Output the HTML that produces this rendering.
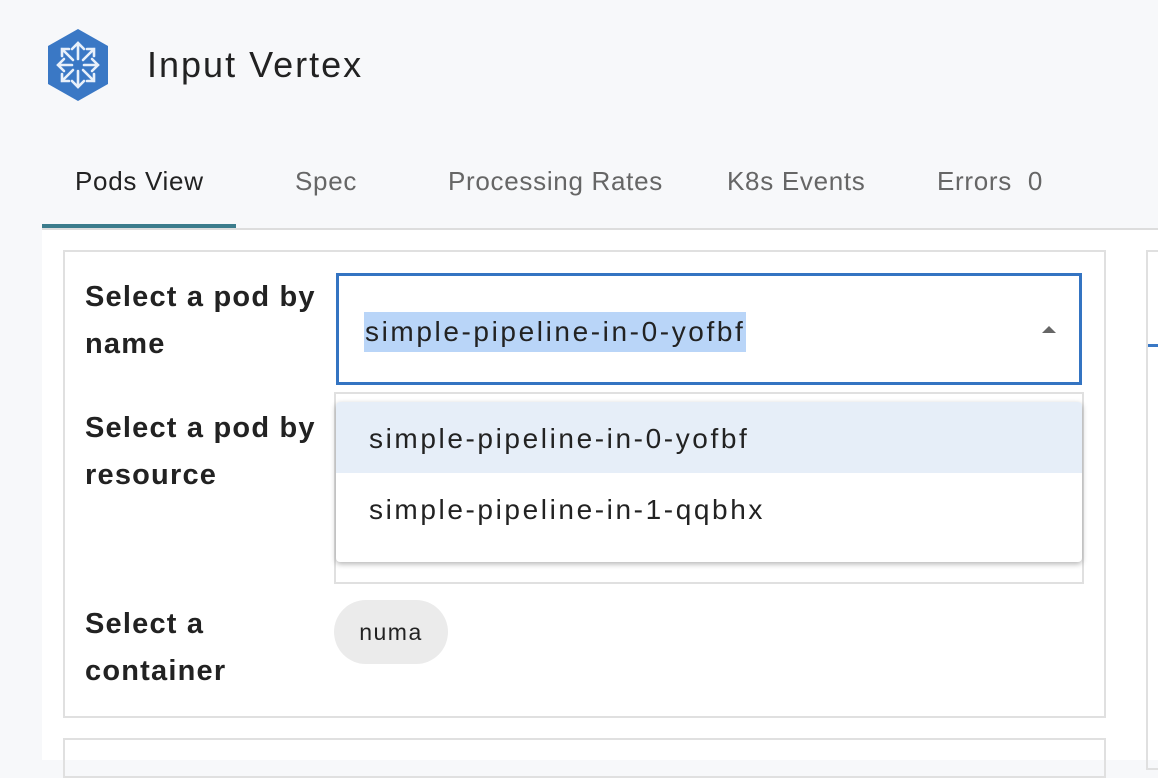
<!DOCTYPE html>
<html><head><meta charset="utf-8"><style>
*{margin:0;padding:0;box-sizing:border-box}
body{width:1158px;height:760px;overflow:hidden;background:#f7f8fa;font-family:"Liberation Sans",sans-serif;color:#222;position:relative}
.abs{position:absolute}
.tab{position:absolute;top:166px;font-size:26px;color:#666;white-space:nowrap;letter-spacing:0.7px}
.lbl{position:absolute;left:85px;font-size:29px;font-weight:bold;color:#222;line-height:47px;letter-spacing:1.2px}
.opt{font-size:28px;letter-spacing:2.6px}
</style></head><body>
<svg class="abs" style="left:44px;top:27px" width="68" height="76" viewBox="0 0 68 76">
<polygon points="34,2 64,19 64,57 34,74 4,57 4,19" fill="#3a78c5"/>
<g stroke="#e8f0fa" stroke-width="2.6" fill="none" stroke-linecap="round">
<path d="M34 32V16M28 22l6-6 6 6"/><path d="M34 44V60M28 54l6 6 6-6"/>
<path d="M28 38H14M20 32l-6 6 6 6"/><path d="M40 38H54M48 32l6 6-6 6"/>
<path d="M29 33L18 22M18 29v-7h7"/><path d="M39 33L50 22M43 22h7v7"/>
<path d="M29 43L18 54M18 47v7h7"/><path d="M39 43L50 54M50 47v7h-7"/>
</g></svg>
<div class="abs" style="left:147px;top:44px;font-size:36px;color:#222;letter-spacing:2px">Input Vertex</div>
<div class="tab" style="left:75px;color:#222">Pods View</div>
<div class="tab" style="left:295px">Spec</div>
<div class="tab" style="left:448px">Processing Rates</div>
<div class="tab" style="left:727px">K8s Events</div>
<div class="tab" style="left:937px">Errors&nbsp; 0</div>
<div class="abs" style="left:42px;top:228px;width:1116px;height:2px;background:#ddd"></div>
<div class="abs" style="left:42px;top:224px;width:194px;height:4px;background:#3b7c8c"></div>
<div class="abs" style="left:42px;top:230px;width:1116px;height:530px;background:#fff"></div>
<div class="abs" style="left:63px;top:250px;width:1043px;height:468px;border:2px solid #e0e0e0"></div>
<div class="abs" style="left:63px;top:738px;width:1043px;height:40px;border:2px solid #e0e0e0"></div>
<div class="abs" style="left:1146px;top:250px;width:20px;height:520px;border:2px solid #e0e0e0;border-right:none"></div>
<div class="abs" style="left:1148px;top:344px;width:10px;height:3px;background:#3a78c5"></div>
<div class="lbl" style="top:274px">Select a pod by<br>name</div>
<div class="lbl" style="top:405px">Select a pod by<br>resource</div>
<div class="lbl" style="top:601px">Select a<br>container</div>
<div class="abs" style="left:334px;top:392px;width:750px;height:192px;border:2px solid #e0e0e0"></div>
<div class="abs" style="left:336px;top:273px;width:746px;height:112px;border:3px solid #3474c2;background:#fff"></div>
<div class="abs opt" style="left:364px;top:312px;height:40px;padding:0 1px;background:#b9d5f8;line-height:40px;color:#222">simple-pipeline-in-0-yofbf</div>
<div class="abs" style="left:1042px;top:326px;width:0;height:0;border-left:7px solid transparent;border-right:7px solid transparent;border-bottom:7px solid #666"></div>
<div class="abs" style="left:336px;top:402px;width:746px;height:160px;background:#fff;border-radius:4px;box-shadow:0 2px 6px rgba(0,0,0,.3);overflow:hidden">
<div class="opt" style="height:71px;background:#e6eef8;padding-left:33px;line-height:73px;color:#222">simple-pipeline-in-0-yofbf</div>
<div class="opt" style="height:73px;padding-left:33px;line-height:73px;color:#222">simple-pipeline-in-1-qqbhx</div>
</div>
<div class="abs" style="left:334px;top:600px;width:114px;height:64px;border-radius:32px;background:#ebebeb;font-size:23px;line-height:64px;text-align:center;color:#222;letter-spacing:1.5px">numa</div>
</body></html>
